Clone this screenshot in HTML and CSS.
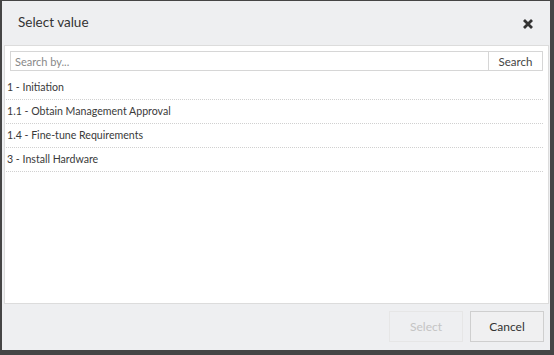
FILE: index.html
```html
<!DOCTYPE html>
<html>
<head>
<meta charset="utf-8">
<link rel="stylesheet" href="styles.css">
</head>
<body>
<div class="dialog">
  <div class="header">
    <span class="title">Select value</span>
    <svg class="close" width="12" height="12" viewBox="0 0 12 12"><path d="M2 2 L10 10 M10 2 L2 10" stroke="#333" stroke-width="2.8" stroke-linecap="butt"/></svg>
  </div>
  <div class="content">
    <div class="searchbar">
      <input class="search-input" type="text" placeholder="Search by...">
      <button class="search-btn">Search</button>
    </div>
    <ul class="list">
      <li>1 - Initiation</li>
      <li>1.1 - Obtain Management Approval</li>
      <li>1.4 - Fine-tune Requirements</li>
      <li>3 - Install Hardware</li>
    </ul>
  </div>
  <div class="footer">
    <button class="btn btn-disabled">Select</button>
    <button class="btn">Cancel</button>
  </div>
</div>
</body>
</html>
```

FILE: styles.css
```css
html, body { margin: 0; padding: 0; }
body {
  width: 554px; height: 355px;
  background: #454545;
  font-family: "Lato", "Liberation Sans", sans-serif;
  color: #333;
  box-sizing: border-box;
  padding: 1px 4px 5px 2px;
}
.dialog {
  width: 548px; height: 349px;
  background: #eeeff1;
  display: flex; flex-direction: column;
}
.header {
  height: 44px;
  display: flex; align-items: center; justify-content: space-between;
  padding: 0 16px 0 16px;
  box-sizing: border-box;
}
.title { font-size: 13.5px; color: #333; margin-top: -2px; }
.close { margin-top: 2px; }
.content {
  margin: 0 1px 0 2px;
  height: 259px;
  background: #fff;
  border: 1px solid #dcdcdc;
  box-sizing: border-box;
  padding: 5px 5px 0 1px;
}
.searchbar { display: flex; margin-left: 4px; height: 20px; }
.search-input {
  flex: 1; height: 20px; box-sizing: border-box;
  border: 1px solid #d6d6d6; border-right: none;
  font-family: inherit; font-size: 11px; padding: 0 4px; color: #333;
  outline: none;
}
.search-input::placeholder { color: #888; }
.search-btn {
  width: 55px; height: 20px; box-sizing: border-box;
  border: 1px solid #d6d6d6; background: #fff;
  font-family: inherit; font-size: 11.5px; color: #444; padding: 0;
}
.list { list-style: none; margin: 5px 0 0 0; padding: 0; }
.list li {
  height: 24px; line-height: 23px; box-sizing: border-box;
  border-bottom: 1px dotted #d0d0d0;
  font-size: 10.6px; color: #3a3a3a; padding-left: 1px;
}
.footer {
  flex: 1;
  display: flex; justify-content: flex-end; align-items: center;
  gap: 7px; padding-right: 6px; padding-bottom: 1px;
}
.btn {
  width: 74px; height: 31px; box-sizing: border-box;
  border: 1px solid #cfcfcf; background: #f0f0f1;
  font-family: inherit; font-size: 12px; color: #333; padding: 0;
}
.btn-disabled { color: #c4c4c4; border-color: #e6e6e6; background: #eeeff1; }
```
